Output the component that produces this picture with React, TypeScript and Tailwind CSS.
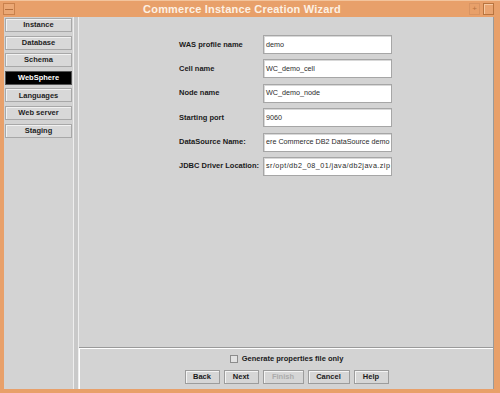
import React from "react";

const navItems = ["Instance", "Database", "Schema", "WebSphere", "Languages", "Web server", "Staging"];

const fields: { label: string; value: string; track: string }[] = [
  { label: "WAS profile name", value: "demo", track: "tracking-normal" },
  { label: "Cell name", value: "WC_demo_cell", track: "tracking-normal" },
  { label: "Node name", value: "WC_demo_node", track: "tracking-normal" },
  { label: "Starting port", value: "9060", track: "tracking-normal" },
  { label: "DataSource Name:", value: "ere Commerce DB2 DataSource demo", track: "tracking-normal" },
  { label: "JDBC Driver Location:", value: "sr/opt/db2_08_01/java/db2java.zip", track: "tracking-[0.45px]" },
];

function WizButton({ label, w, disabled }: { label: string; w: string; disabled?: boolean }) {
  return (
    <div
      className={`${w} h-[14px] flex items-center justify-center border border-[#9c9c9c] bg-[#d6d6d6] shadow-[inset_1px_1px_0_#f4f4f4] text-[7.5px] font-bold leading-none ${
        disabled ? "text-[#ababab]" : "text-[#1a1a1a]"
      }`}
    >
      {label}
    </div>
  );
}

export default function App() {
  return (
    <div className="w-[500px] h-[393px] bg-[#e8a06a] flex flex-col overflow-hidden font-['Liberation_Sans',Arial,sans-serif]">
      {/* Title bar */}
      <div className="h-[17px] shrink-0 flex items-center border-t border-[#f3c49c]">
        <div className="ml-[3px] w-[12px] h-[12px] border border-[#c9814c] bg-[#eba875] flex items-center justify-center">
          <div className="w-[8px] h-px bg-[#b5703e]" />
        </div>
        <div className="flex-1 text-center text-[11px] font-bold text-[#fdf1e4] leading-none tracking-[0.2px]">
          Commerce Instance Creation Wizard
        </div>
        <div className="w-[11px] h-[12px] border border-[#d99462] flex items-center justify-center text-[8px] leading-none text-[#b5703e]">
          +
        </div>
        <div className="ml-[3px] mr-[6px] w-[11px] h-[12px] border border-[#b8743f] shadow-[inset_1px_1px_0_#f6c9a2] bg-[#e9a470]" />
      </div>

      {/* Body */}
      <div className="flex-1 min-h-0 flex pl-[4px] pr-[6px] pb-[4px]">
        {/* Sidebar */}
        <div className="w-[69px] shrink-0 bg-[#d3d3d3] flex flex-col px-[1px] pt-[1px] gap-[3.6px]">
          {navItems.map((item) => {
            const active = item === "WebSphere";
            return (
              <div
                key={item}
                className={`h-[14px] flex items-center justify-center text-[7.5px] font-bold leading-none border ${
                  active
                    ? "bg-black text-white border-[#555]"
                    : "bg-[#d8d8d8] text-[#1e1e1e] border-[#a8a8a8] shadow-[inset_1px_1px_0_#f2f2f2]"
                }`}
              >
                {item}
              </div>
            );
          })}
        </div>

        {/* Splitter */}
        <div className="w-[6px] shrink-0 bg-[#c9c9c9] border-l border-[#eeeeee] border-r border-[#9a9a9a]" />

        {/* Main */}
        <div className="flex-1 min-w-0 flex flex-col bg-[#d3d3d3] border-r border-[#9a9a9a]">
          <div className="flex-1 min-h-0 pt-[18px] pl-[100px]">
            <div className="flex flex-col gap-[5.4px]">
              {fields.map((f) => (
                <div key={f.label} className="flex items-center h-[19px]">
                  <div className="w-[84px] shrink-0 text-[7.5px] font-bold text-[#1a1a1a] leading-[10px]">
                    {f.label}
                  </div>
                  <div className="w-[129px] h-[19px] bg-white border border-[#a6a6a6] shadow-[inset_1px_1px_0_#d8d8d8] flex items-center pl-[2px]">
                    <span className={`whitespace-nowrap text-[7.2px] text-[#2a2a2a] leading-[12px] ${f.track}`}>
                      {f.value}
                    </span>
                  </div>
                </div>
              ))}
            </div>
          </div>

          {/* Bottom area */}
          <div className="h-[42px] shrink-0 border-t border-[#9a9a9a]">
            <div className="h-full border-t border-l border-white flex flex-col items-center pt-[6px]">
              <div className="h-[8px] flex items-center gap-[4px]">
                <div className="w-[8px] h-[8px] border border-[#8c8c8c] bg-[#e2e2e2]" />
                <span className="text-[7.5px] font-bold text-[#1a1a1a] leading-[10px]">
                  Generate properties file only
                </span>
              </div>
              <div className="mt-[7px] flex gap-[4px]">
                <WizButton label="Back" w="w-[35px]" />
                <WizButton label="Next" w="w-[35px]" />
                <WizButton label="Finish" w="w-[41px]" disabled />
                <WizButton label="Cancel" w="w-[42px]" />
                <WizButton label="Help" w="w-[35px]" />
              </div>
            </div>
          </div>
        </div>
      </div>
    </div>
  );
}
